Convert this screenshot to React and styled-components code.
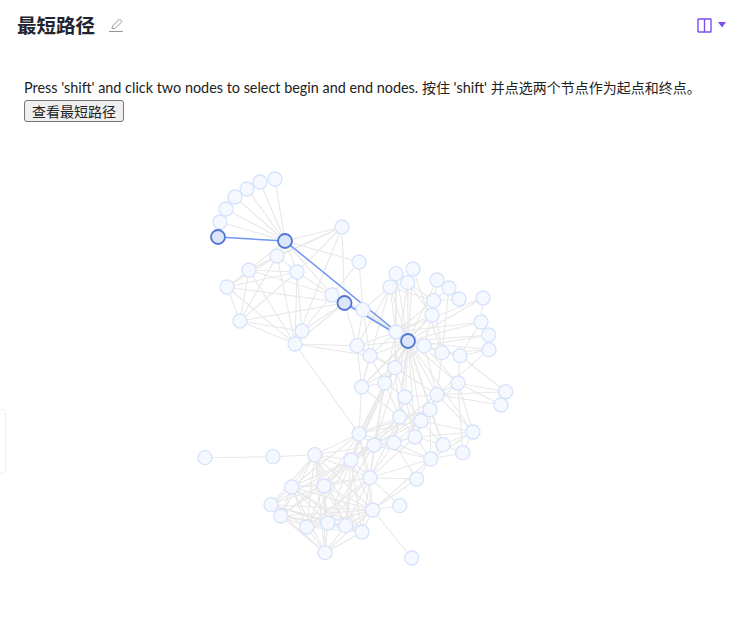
import React from "react";
import styled, { createGlobalStyle } from "styled-components";

const GlobalStyle = createGlobalStyle`
  html, body {
    margin: 0;
    padding: 0;
    background: #fff;
    overflow: hidden;
  }
  body {
    font-family: Lato, "Noto Sans CJK SC", sans-serif;
  }
`;

const Page = styled.div`
  position: relative;
  width: 746px;
  height: 620px;
  overflow: hidden;
`;

const Header = styled.header`
  display: flex;
  align-items: center;
  justify-content: space-between;
  height: 50px;
  padding: 0 20px 0 17px;
`;

const TitleGroup = styled.div`
  display: flex;
  align-items: center;
  gap: 13px;
`;

const Title = styled.h1`
  margin: 0;
  font-family: "Noto Sans CJK SC", sans-serif;
  font-size: 19.5px;
  line-height: 28px;
  font-weight: 700;
  color: #1f2530;
`;

const LayoutToggle = styled.div`
  display: flex;
  align-items: center;
  gap: 6px;
`;

const Content = styled.div`
  padding: 28px 24px 0;
`;

const Hint = styled.div`
  font-size: 14.4px;
  line-height: 18px;
  color: #222;
  white-space: nowrap;
`;

const Cjk = styled.span`
  font-family: "Noto Sans CJK SC", sans-serif;
  font-size: 14px;
`;

const RunButton = styled.button`
  display: block;
  box-sizing: border-box;
  width: 100px;
  height: 22px;
  margin-top: 3px;
  padding: 0;
  font-family: "Noto Sans CJK SC", sans-serif;
  font-size: 14px;
  line-height: 18px;
  color: #222;
  background: #efefef;
  border: 1px solid #767676;
  border-radius: 3px;
`;

const Graph = styled.svg`
  display: block;
  width: 746px;
  height: 499px;
`;

const SideTab = styled.div`
  position: absolute;
  left: -8px;
  top: 409px;
  width: 14px;
  height: 65px;
  box-sizing: border-box;
  border: 1px solid #efefef;
  border-radius: 4px;
  background: #fff;
`;

const nodes = [
  [275, 178], [260, 181], [247, 188], [235, 196], [226, 208], [220, 221], [218, 236], [285, 240],
  [342, 226], [359, 261], [277, 255], [249, 269], [297, 271], [227, 286], [240, 320], [302, 330],
  [295, 343], [332, 294], [344.5, 302], [363, 308.7], [396, 272.7], [413, 268], [407.7, 281.7], [390, 286],
  [437, 279], [449, 287], [459, 298], [433.7, 299.7], [483, 297], [432, 314], [481, 321], [488.7, 334],
  [489, 348.7], [396, 331], [408, 340], [424, 344.7], [442, 351.7], [460, 354.7], [357, 344.7], [370, 354.7],
  [395, 366.7], [361.7, 386], [384.7, 382], [405, 396], [437, 393.7], [458, 382], [505.7, 390.7], [501, 404],
  [399.7, 416], [430, 408.7], [421, 420], [473, 431], [359, 432.7], [374, 444], [394, 441.7], [415, 436],
  [443, 443.7], [462.7, 451.7], [430.7, 458], [351, 459], [370, 476.7], [416.7, 478], [205, 456.7], [273, 455.7],
  [314.7, 453.7], [291.7, 486], [324, 485], [271, 503.7], [280.7, 515], [306.7, 526], [327.7, 522], [345.7, 524.7],
  [362, 531], [372.7, 509], [399.7, 504.7], [325, 551.7], [411.7, 557],
];

const selected = [6, 7, 18, 34];
const pathEdges = [[6, 7], [7, 34], [18, 34]];

// neighbours of each hub, read off the picture
const spokes = {
  7: [0, 1, 2, 3, 4, 5, 8, 9, 10, 11, 12, 17, 33],
  8: [10, 11, 16, 18, 12],
  9: [17, 19],
  10: [11, 12, 13, 14, 16],
  11: [12, 13, 14, 16, 17],
  12: [13, 14, 15, 16, 17],
  13: [14, 16, 18],
  14: [16, 18, 15],
  15: [16, 17, 18],
  16: [18, 38, 39, 52],
  17: [18, 19, 33],
  18: [19, 33, 38],
  19: [33, 38, 39, 23],
  20: [23, 33, 34, 40, 22],
  21: [22, 34, 36],
  22: [23, 27, 29, 34, 40],
  23: [27, 33, 34, 38, 41],
  24: [27, 34],
  25: [27, 36],
  26: [27],
  27: [29, 33, 36],
  28: [30, 33, 34],
  29: [33, 34, 35, 41],
  30: [34, 37, 33],
  31: [34, 35],
  32: [34, 36, 37, 44],
  33: [34, 38, 39, 40, 42],
  34: [35, 36, 37, 38, 39, 40, 41, 42, 43, 44, 45, 48, 49, 50, 52, 53, 54, 55, 56, 51, 59],
  35: [36, 37, 40, 44, 45],
  36: [37, 44],
  37: [45, 46],
  38: [39, 40, 41],
  39: [40, 42, 41],
  40: [41, 42, 43, 44, 48, 52, 59],
  41: [42, 48, 52],
  42: [43, 48, 52, 53, 59, 60],
  43: [44, 48, 50, 55, 54],
  44: [45, 46, 47, 49, 50, 55, 51, 59],
  45: [46, 47, 49, 51, 57],
  48: [49, 50, 52, 53, 54, 55, 59, 60],
  49: [50, 55, 52, 56, 58, 53],
  50: [54, 55, 56, 53, 52],
  51: [56, 57, 58, 55, 50],
  52: [53, 54, 59, 60, 64, 66, 65, 73, 71],
  53: [54, 55, 59, 60, 66, 70, 58],
  54: [55, 58, 61, 60, 59, 64],
  55: [56, 58, 60],
  56: [57, 58],
  57: [58],
  58: [60, 61, 73],
  59: [60, 64, 65, 66, 67, 68, 69, 70, 71, 72, 73],
  60: [64, 65, 66, 69, 70, 71, 72, 73, 74, 61],
  62: [63],
  63: [64],
  73: [74, 76, 61],
};

const cliqueNodes = [64, 65, 66, 67, 68, 69, 70, 71, 72, 73, 75];

const edges = [];
Object.entries(spokes).forEach(([from, list]) => {
  list.forEach((to) => edges.push([Number(from), to]));
});
cliqueNodes.forEach((a, i) => {
  cliqueNodes.slice(i + 1).forEach((b) => edges.push([a, b]));
});

const NetworkGraph = () => (
  <Graph viewBox="0 121 746 499">
    <g stroke="#e8e8e8" strokeWidth="1.1">
      {edges.map(([a, b], i) => (
        <line key={i} x1={nodes[a][0]} y1={nodes[a][1]} x2={nodes[b][0]} y2={nodes[b][1]} />
      ))}
    </g>
    <g stroke="#6f97f5" strokeWidth="1.5">
      {pathEdges.map(([a, b], i) => (
        <line key={i} x1={nodes[a][0]} y1={nodes[a][1]} x2={nodes[b][0]} y2={nodes[b][1]} />
      ))}
    </g>
    {nodes.map(([x, y], i) =>
      selected.includes(i) ? null : (
        <circle key={i} cx={x} cy={y} r="7" fill="#f5f8ff" stroke="#d6e3fd" strokeWidth="1.3" />
      )
    )}
    {selected.map((i) => (
      <circle key={i} cx={nodes[i][0]} cy={nodes[i][1]} r="7" fill="#dde7fb" stroke="#5276d6" strokeWidth="1.8" />
    ))}
  </Graph>
);

const EditIcon = () => (
  <svg width="16" height="16" viewBox="0 0 16 16" fill="none" stroke="#999" strokeWidth="1">
    <path d="M4 11.5 L4.5 9 L11.5 2 L14 4.5 L7 11.5 Z" />
    <path d="M1 14.5 H15" />
  </svg>
);

const ColumnsIcon = () => (
  <svg width="15" height="15" viewBox="0 0 15 15" fill="none" stroke="#7b4df2" strokeWidth="1.4">
    <rect x="1" y="1" width="13" height="13" rx="0.5" />
    <path d="M7.5 1 V14" />
  </svg>
);

const CaretIcon = () => (
  <svg width="8" height="6" viewBox="0 0 8 6" fill="#7b4df2">
    <path d="M0 0 H8 L4 5.5 Z" />
  </svg>
);

export default function App() {
  return (
    <Page>
      <GlobalStyle />
      <Header>
        <TitleGroup>
          <Title>最短路径</Title>
          <EditIcon />
        </TitleGroup>
        <LayoutToggle>
          <ColumnsIcon />
          <CaretIcon />
        </LayoutToggle>
      </Header>
      <Content>
        <Hint>
          Press 'shift' and click two nodes to select begin and end nodes. <Cjk>按住</Cjk> 'shift' <Cjk>并点选两个节点作为起点和终点。</Cjk>
        </Hint>
        <RunButton>查看最短路径</RunButton>
      </Content>
      <NetworkGraph />
      <SideTab />
    </Page>
  );
}
